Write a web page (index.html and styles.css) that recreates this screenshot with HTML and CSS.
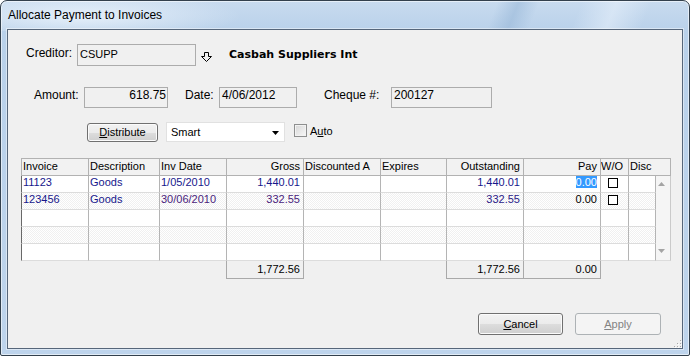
FILE: index.html
```html
<!DOCTYPE html>
<html>
<head>
<meta charset="utf-8">
<title>Allocate Payment to Invoices</title>
<link rel="stylesheet" href="styles.css">
</head>
<body>
<div class="window">
  <div class="titlebar">Allocate Payment to Invoices</div>
  <div class="client">
    <div class="row row-creditor">
      <span class="lbl lbl-creditor">Creditor:</span>
      <div class="field field-creditor">CSUPP</div>
      <svg class="lookup" width="11" height="10" viewBox="0 0 11 10"><path d="M3.5 0.5H7.5V4.5H10.5L5.5 9.5L0.5 4.5H3.5Z" fill="none" stroke="#000" stroke-width="1"/></svg>
      <span class="cred-name">Casbah Suppliers Int</span>
    </div>
    <div class="row row-amount">
      <span class="lbl lbl-amount">Amount:</span>
      <div class="field field-amount">618.75</div>
      <span class="lbl lbl-date">Date:</span>
      <div class="field field-date">4/06/2012</div>
      <span class="lbl lbl-cheque">Cheque #:</span>
      <div class="field field-cheque">200127</div>
    </div>
    <div class="row row-dist">
      <button class="btn btn-dist"><span><u>D</u>istribute</span></button>
      <div class="combo"><span class="combo-text">Smart</span><svg class="caret" width="7" height="4" viewBox="0 0 7 4"><path d="M0 0H7L3.5 4Z" fill="#000"/></svg></div>
      <span class="check"></span>
      <span class="check-lbl">A<u>u</u>to</span>
    </div>

    <div class="grid">
      <div class="gh first">Invoice</div>
      <div class="gh">Description</div>
      <div class="gh">Inv Date</div>
      <div class="gh r">Gross</div>
      <div class="gh">Discounted A</div>
      <div class="gh">Expires</div>
      <div class="gh r">Outstanding</div>
      <div class="gh r">Pay</div>
      <div class="gh wo">W/O</div>
      <div class="gh span2">Disc</div>

      <div class="scroll">
        <svg width="7" height="4" viewBox="0 0 7 4"><path d="M0 4H7L3.5 0Z" fill="#a4a4a4"/></svg>
        <svg width="7" height="4" viewBox="0 0 7 4"><path d="M0 0H7L3.5 4Z" fill="#a4a4a4"/></svg>
      </div>

      <div class="gc first">11123</div>
      <div class="gc">Goods</div>
      <div class="gc">1/05/2010</div>
      <div class="gc r">1,440.01</div>
      <div class="gc"></div>
      <div class="gc"></div>
      <div class="gc r">1,440.01</div>
      <div class="gc r black"><span class="sel">0.00</span></div>
      <div class="gc"><span class="cb"></span></div>
      <div class="gc"></div>

      <div class="gc first alt">123456</div>
      <div class="gc alt">Goods</div>
      <div class="gc alt pur">30/06/2010</div>
      <div class="gc alt r pur">332.55</div>
      <div class="gc alt"></div>
      <div class="gc alt"></div>
      <div class="gc alt r pur2">332.55</div>
      <div class="gc alt r black">0.00</div>
      <div class="gc alt"><span class="cb"></span></div>
      <div class="gc alt"></div>

      <div class="gc first"></div>
      <div class="gc"></div>
      <div class="gc"></div>
      <div class="gc"></div>
      <div class="gc"></div>
      <div class="gc"></div>
      <div class="gc"></div>
      <div class="gc"></div>
      <div class="gc"></div>
      <div class="gc"></div>

      <div class="gc first alt"></div>
      <div class="gc alt"></div>
      <div class="gc alt"></div>
      <div class="gc alt"></div>
      <div class="gc alt"></div>
      <div class="gc alt"></div>
      <div class="gc alt"></div>
      <div class="gc alt"></div>
      <div class="gc alt"></div>
      <div class="gc alt"></div>

      <div class="gc first"></div>
      <div class="gc"></div>
      <div class="gc"></div>
      <div class="gc"></div>
      <div class="gc"></div>
      <div class="gc"></div>
      <div class="gc"></div>
      <div class="gc"></div>
      <div class="gc"></div>
      <div class="gc"></div>
    </div>

    <div class="totals">
      <div class="tsp1"></div>
      <div class="tbox t1">1,772.56</div>
      <div class="tsp2"></div>
      <div class="tbox t2">1,772.56</div>
      <div class="tbox t3">0.00</div>
    </div>

    <div class="actions">
      <button class="btn btn-act"><span><u>C</u>ancel</span></button>
      <button class="btn btn-act btn-disabled" disabled><span><u>A</u>pply</span></button>
    </div>

    <svg class="grip" width="9" height="9" viewBox="0 0 9 9">
      <rect x="7" y="1" width="1" height="1" fill="#a9a9a9"/>
      <rect x="7" y="4" width="1" height="1" fill="#a9a9a9"/>
      <rect x="4" y="4" width="1" height="1" fill="#a9a9a9"/>
      <rect x="7" y="7" width="1" height="1" fill="#a9a9a9"/>
      <rect x="4" y="7" width="1" height="1" fill="#a9a9a9"/>
      <rect x="1" y="7" width="1" height="1" fill="#a9a9a9"/>
      <rect x="8" y="2" width="1" height="1" fill="#fff"/>
      <rect x="8" y="5" width="1" height="1" fill="#fff"/>
      <rect x="5" y="5" width="1" height="1" fill="#fff"/>
      <rect x="8" y="8" width="1" height="1" fill="#fff"/>
      <rect x="5" y="8" width="1" height="1" fill="#fff"/>
      <rect x="2" y="8" width="1" height="1" fill="#fff"/>
    </svg>
  </div>
</div>
</body>
</html>
```

FILE: styles.css
```css
* { box-sizing: border-box; }

html, body {
  margin: 0;
  padding: 0;
  background: #ffffff;
}

body {
  width: 690px;
  height: 356px;
  overflow: hidden;
  font-family: "Liberation Sans", Arial, sans-serif;
  font-size: 11px;
  color: #000;
}

.window {
  width: 690px;
  height: 356px;
  border: 1px solid #33404d;
  border-radius: 7px 7px 2px 2px;
  padding: 0 6px 6px 6px;
  display: flex;
  flex-direction: column;
  background:
    linear-gradient(112deg, rgba(0,0,0,0) 0, rgba(0,0,0,0) 71%, rgba(150,182,215,0.55) 74%, rgba(0,0,0,0) 77%, rgba(0,0,0,0) 83%, rgba(226,237,249,0.65) 88%, rgba(0,0,0,0) 93%) top left / 100% 30px no-repeat,
    radial-gradient(ellipse 160px 24px at 80px 15px, rgba(236,244,252,0.85), rgba(236,244,252,0)) top left / 100% 30px no-repeat,
    linear-gradient(#c8dbef, #b9d1ea 30px, #bed4ec 100%);
  box-shadow: inset 0 0 0 1px rgba(255,255,255,0.55);
}

.titlebar {
  height: 28px;
  flex: none;
  display: flex;
  align-items: center;
  padding-left: 1px;
  font-size: 12px;
  line-height: 14px;
  color: #000;
}

.client {
  flex: 1;
  position: relative;
  border: 1px solid #56667a;
  background: #f0f0f0;
  display: flex;
  flex-direction: column;
  box-shadow: 0 0 0 1px rgba(255,255,255,0.45);
}

/* ---------- form rows ---------- */
.row {
  display: flex;
  align-items: flex-start;
  flex: none;
}

.lbl {
  font-size: 12px;
  line-height: 14px;
  white-space: nowrap;
  flex: none;
}

.field {
  flex: none;
  border: 1px solid #acacac;
  background: #f0f0f0;
  white-space: nowrap;
  overflow: hidden;
}

.row-creditor { margin-top: 14px; height: 22px; }
.lbl-creditor { margin-left: 18px; width: 51px; margin-top: 2px; }
.field-creditor {
  width: 119px;
  height: 22px;
  font-size: 11px;
  line-height: 13px;
  padding: 3px 0 0 2px;
}
.lookup { flex: none; margin-left: 5px; margin-top: 8px; display: block; }
.cred-name {
  margin-left: 17px;
  margin-top: 4px;
  font-family: "DejaVu Sans", Verdana, sans-serif;
  font-weight: bold;
  font-size: 11px;
  line-height: 13px;
  white-space: nowrap;
}

.row-amount { margin-top: 21px; height: 21px; }
.row-amount .lbl { margin-top: 1px; }
.row-amount .field {
  height: 21px;
  font-size: 12px;
  line-height: 14px;
  padding-top: 0;
}
.lbl-amount { margin-left: 26px; width: 50px; }
.field-amount { width: 84px; text-align: right; padding-right: 1px; }
.lbl-date { margin-left: 17px; width: 34px; }
.field-date { width: 78px; padding-left: 2px; }
.lbl-cheque { margin-left: 27px; width: 67px; }
.field-cheque { width: 101px; padding-left: 2px; }

.row-dist { margin-top: 14px; height: 20px; }

/* ---------- buttons ---------- */
.btn {
  font-family: "Liberation Sans", Arial, sans-serif;
  font-size: 11px;
  color: #000;
  border: 1px solid #707070;
  border-radius: 3px;
  background: linear-gradient(#f2f2f2 0%, #ebebeb 50%, #dddddd 51%, #cfcfcf 100%);
  box-shadow: inset 0 0 0 1px #fbfbfb;
  padding: 0;
  margin: 0;
  display: flex;
  align-items: center;
  justify-content: center;
  line-height: 13px;
  flex: none;
}

.btn-dist { margin-left: 79px; margin-top: 1px; width: 71px; height: 19px; }

.btn-disabled {
  border-color: #adb2b5;
  background: #f4f4f4;
  color: #838383;
  box-shadow: none;
}

.combo {
  flex: none;
  margin-left: 8px;
  width: 119px;
  height: 20px;
  background: #fff;
  border: 1px solid #e1e1e1;
  display: flex;
  align-items: center;
  padding-left: 4px;
  line-height: 18px;
}
.combo-text { flex: 1; }
.caret { display: block; margin-right: 5px; margin-top: 1px; }

.check {
  flex: none;
  display: block;
  margin-left: 9px;
  margin-top: 2px;
  width: 13px;
  height: 13px;
  border: 1px solid #8e8f8f;
  background: linear-gradient(135deg, #d6d6d6, #f8f8f8);
  box-shadow: inset 0 0 0 1px #f2f2f2;
}
.check-lbl { margin-left: 3px; margin-top: 3px; line-height: 13px; }

/* ---------- grid ---------- */
.grid {
  flex: none;
  margin-left: 13px;
  margin-top: 16px;
  width: 650px;
  display: grid;
  grid-template-columns: 68px 71px 67px 77px 77px 66px 77px 77px 28px 27px 15px;
  grid-template-rows: 18px repeat(5, 17px);
}

.gh {
  border-top: 1px solid #b2b2b2;
  border-bottom: 1px solid #b2b2b2;
  border-right: 1px solid #b2b2b2;
  background: #f2f2f2;
  padding: 1px 1px 0 1px;
  line-height: 13px;
  white-space: nowrap;
  overflow: hidden;
}
.gh.first { border-left: 1px solid #b2b2b2; }
.gh.wo { padding-left: 0; }
.gh.span2 { grid-column: span 2; }

.gc {
  border-right: 1px solid #b4b4b4;
  border-bottom: 1px solid #dcdcdc;
  padding: 0 1px;
  line-height: 13px;
  white-space: nowrap;
  overflow: hidden;
  color: #17178c;
  background: #fff;
}
.gc.first { border-left: 1px solid #686868; }
.gc.alt {
  background: repeating-conic-gradient(#f0f0f0 0 25%, #ffffff 0 50%) 0 0 / 2px 2px;
}
.r { text-align: right; padding-right: 3px; }
.gc.pur { color: #4a1c7c; }
.gc.pur2 { color: #2c1a88; }
.gc.black { color: #000; }

.sel { background: #3399ff; color: #fff; }

.cb {
  display: block;
  width: 10px;
  height: 10px;
  border: 1px solid #000;
  background: #fff;
  margin: 2px 0 0 6px;
}

.scroll {
  grid-column: 11;
  grid-row: 2 / 7;
  background: #f5f5f5;
  border-right: 1px solid #cacaca;
  border-bottom: 1px solid #dcdcdc;
  display: flex;
  flex-direction: column;
  justify-content: space-between;
  align-items: flex-start;
  padding: 6px 0 7px 2px;
}
.scroll svg { display: block; }

/* ---------- totals ---------- */
.totals {
  flex: none;
  display: flex;
  height: 18px;
  margin-left: 13px;
}
.tsp1 { width: 205px; flex: none; }
.tsp2 { width: 142px; flex: none; }
.tbox {
  flex: none;
  height: 18px;
  border: 1px solid #a9a9a9;
  border-top: none;
  text-align: right;
  padding: 2px 3px 0 0;
  line-height: 13px;
}
.t1 { width: 78px; }
.t2 { width: 78px; }
.t3 { width: 77px; border-left: none; }

/* ---------- dialog buttons ---------- */
.actions {
  flex: none;
  margin-top: auto;
  margin-bottom: 13px;
  padding-right: 21px;
  display: flex;
  justify-content: flex-end;
  gap: 12px;
}
.btn-act { width: 85px; height: 22px; }
.btn-act.btn-disabled { width: 86px; }

.grip {
  position: absolute;
  right: 0;
  bottom: 0;
  display: block;
}
```
